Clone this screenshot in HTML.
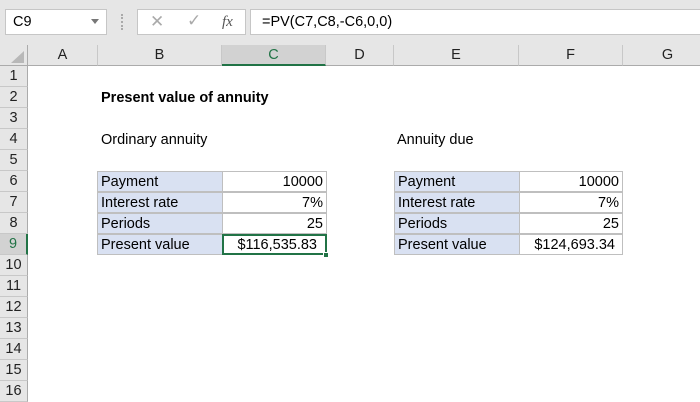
<!DOCTYPE html><html><head><style>
body{margin:0;width:700px;height:400px;overflow:hidden;background:#fff;font-family:"Liberation Sans",sans-serif;position:relative}
div{position:absolute;box-sizing:border-box}
.t{font-size:14.5px;color:#000;white-space:nowrap}
.ch{top:45px;height:21px;background:#e6e6e6;border-right:1px solid #c8c8c8;border-bottom:1px solid #ababab;text-align:center;font-size:14.5px;line-height:21px;color:#222}
.rh{left:0;width:28px;height:21px;background:#e6e6e6;border-bottom:1px solid #c8c8c8;border-right:1px solid #ababab;text-align:center;font-size:14.5px;line-height:21px;color:#222}
.c{height:21px;border:1px solid #bfbfbf;font-size:14.5px;line-height:20px;padding:0 3px;white-space:nowrap}
.l{background:#d9e1f2}
.r{text-align:right}
</style></head><body>
<div style="left:0;top:0;width:700px;height:45px;background:#e6e6e6"></div>
<div style="left:5px;top:9px;width:102px;height:26px;background:#fff;border:1px solid #c6c6c6;font-size:14.5px;line-height:24px;padding-left:7px">C9</div>
<div style="left:91px;top:19px;width:0;height:0;border-left:4px solid transparent;border-right:4px solid transparent;border-top:5px solid #777"></div>
<div style="left:121px;top:14px;width:2px;height:16px;border-left:2px dotted #aaa"></div>
<div style="left:137px;top:9px;width:109px;height:26px;background:#fff;border:1px solid #c6c6c6"></div>
<div style="left:150px;top:12px;font-size:17px;color:#aaa">✕</div>
<div style="left:187px;top:11px;font-size:17px;color:#aaa">✓</div>
<div style="left:222px;top:14px;font-size:15px;font-style:italic;font-family:'Liberation Serif',serif;color:#555">fx</div>
<div style="left:250px;top:9px;width:460px;height:26px;background:#fff;border:1px solid #c6c6c6;font-size:14.5px;line-height:24px;padding-left:11px">=PV(C7,C8,-C6,0,0)</div>
<div style="left:0;top:45px;width:28px;height:21px;background:#e6e6e6;border-right:1px solid #ababab;border-bottom:1px solid #ababab"></div>
<div style="left:11px;top:51px;width:0;height:0;border-left:13px solid transparent;border-bottom:12px solid #b8b8b8"></div>
<div class="ch" style="left:28px;width:70px">A</div>
<div class="ch" style="left:98px;width:124px">B</div>
<div class="ch" style="left:222px;width:104px;background:#d2d2d2;border-bottom:2px solid #217346;color:#217346">C</div>
<div class="ch" style="left:326px;width:68px">D</div>
<div class="ch" style="left:394px;width:125px">E</div>
<div class="ch" style="left:519px;width:104px">F</div>
<div class="ch" style="left:623px;width:90px">G</div>
<div class="rh" style="top:66px">1</div><div class="rh" style="top:87px">2</div><div class="rh" style="top:108px">3</div><div class="rh" style="top:129px">4</div><div class="rh" style="top:150px">5</div><div class="rh" style="top:171px">6</div><div class="rh" style="top:192px">7</div><div class="rh" style="top:213px">8</div>
<div class="rh" style="top:234px;background:#d2d2d2;border-right:2px solid #217346;color:#217346">9</div>
<div class="rh" style="top:255px">10</div><div class="rh" style="top:276px">11</div><div class="rh" style="top:297px">12</div><div class="rh" style="top:318px">13</div><div class="rh" style="top:339px">14</div><div class="rh" style="top:360px">15</div><div class="rh" style="top:381px">16</div>
<div class="t" style="left:101px;top:90px;font-weight:bold">Present value of annuity</div>
<div class="t" style="left:101px;top:132px">Ordinary annuity</div>
<div class="t" style="left:397px;top:132px">Annuity due</div>
<div class="c l" style="left:97px;top:171px;width:126px">Payment</div><div class="c r" style="left:222px;top:171px;width:105px">10000</div>
<div class="c l" style="left:97px;top:192px;width:126px">Interest rate</div><div class="c r" style="left:222px;top:192px;width:105px">7%</div>
<div class="c l" style="left:97px;top:213px;width:126px">Periods</div><div class="c r" style="left:222px;top:213px;width:105px">25</div>
<div class="c l" style="left:97px;top:234px;width:126px">Present value</div><div class="c r" style="left:222px;top:234px;width:105px;border:2px solid #217346;line-height:18px;padding-right:8px">$116,535.83</div>
<div style="left:323px;top:252px;width:6px;height:6px;background:#217346;border:1px solid #fff"></div>
<div class="c l" style="left:394px;top:171px;width:126px">Payment</div><div class="c r" style="left:519px;top:171px;width:104px">10000</div>
<div class="c l" style="left:394px;top:192px;width:126px">Interest rate</div><div class="c r" style="left:519px;top:192px;width:104px">7%</div>
<div class="c l" style="left:394px;top:213px;width:126px">Periods</div><div class="c r" style="left:519px;top:213px;width:104px">25</div>
<div class="c l" style="left:394px;top:234px;width:126px">Present value</div><div class="c r" style="left:519px;top:234px;width:104px;padding-right:7px">$124,693.34</div>
</body></html>
